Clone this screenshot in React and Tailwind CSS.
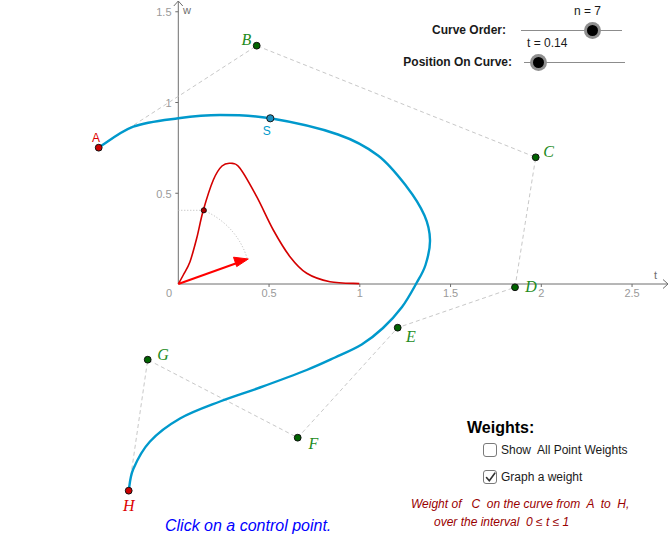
import React from "react";

const BLUE = [
  [98.7, 147.7], [133.3, 126.7], [178.3, 118.3], [220, 115], [270.3, 118.3],
  [338, 134.5], [378, 155.5], [406.7, 186.7], [424.5, 215.5], [430, 240],
  [425.5, 265], [416, 284], [402, 307], [383, 328], [361.7, 344.5],
  [335, 357.5], [306.7, 370], [260, 387.5], [220, 401.5],
  [180, 418.5], [150, 441.5], [133.3, 469], [128.7, 490.7],
];

const RED = [
  [178.3, 284], [183.3, 275], [190, 261.7], [196.7, 238.3], [203.3, 210.3],
  [213.3, 180], [222, 166], [231, 163.3], [240, 168.3], [256.7, 196.7],
  [273.3, 230], [290, 256.7], [306.7, 273.3], [330, 281.7], [359.3, 283.6],
];

function smooth(pts) {
  const n = pts.length;
  let d = `M${pts[0][0]},${pts[0][1]}`;
  for (let i = 0; i < n - 1; i++) {
    const p0 = pts[Math.max(i - 1, 0)];
    const p1 = pts[i];
    const p2 = pts[i + 1];
    const p3 = pts[Math.min(i + 2, n - 1)];
    const c1 = [p1[0] + (p2[0] - p0[0]) / 6, p1[1] + (p2[1] - p0[1]) / 6];
    const c2 = [p2[0] - (p3[0] - p1[0]) / 6, p2[1] - (p3[1] - p1[1]) / 6];
    d += ` C${c1[0].toFixed(2)},${c1[1].toFixed(2)} ${c2[0].toFixed(2)},${c2[1].toFixed(2)} ${p2[0]},${p2[1]}`;
  }
  return d;
}

const CTRL = {
  A: [98.7, 147.7],
  B: [256.7, 45.7],
  C: [535.7, 157.3],
  D: [515, 287.3],
  E: [397.7, 327.7],
  F: [297.7, 437.7],
  G: [147.7, 359.7],
  H: [128.7, 490.7],
};

const SANS = "'Liberation Sans', Arial, sans-serif";
const SERIF = "'Liberation Serif', 'Times New Roman', serif";

function Canvas() {
  const order = ["A", "B", "C", "D", "E", "F", "G", "H"];
  const poly = order.map((k) => CTRL[k].join(",")).join(" ");
  const ox = 178.3;
  const oy = 284;
  const u = 181.5;
  const xt = [0.5, 1, 1.5, 2, 2.5];
  const yt = [0.5, 1, 1.5];
  const green = ["B", "C", "D", "E", "F", "G"];
  const gLabels = {
    B: [246.5, 45],
    C: [548.5, 157],
    D: [531, 291.5],
    E: [411, 342],
    F: [313.5, 449],
    G: [163, 359.5],
  };
  return (
    <svg className="absolute inset-0" width="670" height="550" viewBox="0 0 670 550">
      <g stroke="#6e6e6e" strokeWidth="1" fill="none">
        <line x1={ox} y1={oy} x2={668} y2={oy} />
        <line x1={ox} y1={oy} x2={ox} y2={1} />
        <polyline points="663,279.5 668,284 663,288.5" />
        <polyline points="173.8,6 178.3,1 182.8,6" />
        {xt.map((t) => (
          <line key={t} x1={ox + t * u} y1={oy} x2={ox + t * u} y2={oy + 3} />
        ))}
        {yt.map((t) => (
          <line key={t} x1={ox - 3} y1={oy - t * u} x2={ox} y2={oy - t * u} />
        ))}
      </g>
      <g fill="#9a9a9a" fontFamily={SANS} fontSize="11">
        {xt.map((t) => (
          <text key={t} x={ox + t * u} y={297} textAnchor="middle">{t}</text>
        ))}
        <text x={172} y={297} textAnchor="end">0</text>
        {yt.map((t) => (
          <text key={t} x={171.5} y={oy - t * u + 4.5} textAnchor="end">{t}</text>
        ))}
      </g>
      <g fill="#6e6e6e" fontFamily={SANS} fontSize="11">
        <text x={183} y={14}>w</text>
        <text x={654} y={279}>t</text>
      </g>

      <polyline points={poly} fill="none" stroke="#c8c8c8" strokeWidth="1" strokeDasharray="4 3" />

      <line x1={ox} y1={210.3} x2={203.3} y2={210.3} stroke="#b5b5b5" strokeWidth="1" strokeDasharray="1 2" />
      <path d="M203.3,210.3 A76,76 0 0 1 247.5,259.5" fill="none" stroke="#b5b5b5" strokeWidth="1" strokeDasharray="1 2" />
      <path d={smooth(RED)} fill="none" stroke="#d40000" strokeWidth="1.6" />
      <line x1={ox} y1={oy} x2={237} y2={263} stroke="#ff0000" strokeWidth="2" />
      <polygon points="248.3,259 233.5,257.2 236.7,266.6" fill="#ff0000" stroke="#ff0000" strokeWidth="1" strokeLinejoin="round" />
      <circle cx={203.8} cy={210.3} r={2.6} fill="#a80000" stroke="#000" strokeWidth="0.8" />

      <path d={smooth(BLUE)} fill="none" stroke="#0099cc" strokeWidth="2.4" strokeLinecap="round" />

      {green.map((k) => (
        <circle key={k} cx={CTRL[k][0]} cy={CTRL[k][1]} r={3.4} fill="#006400" stroke="#111" strokeWidth="1" />
      ))}
      <circle cx={CTRL.A[0]} cy={CTRL.A[1]} r={3.4} fill="#cc0000" stroke="#111" strokeWidth="1" />
      <circle cx={CTRL.H[0]} cy={CTRL.H[1]} r={3.4} fill="#cc0000" stroke="#111" strokeWidth="1" />
      <circle cx={270.3} cy={118.3} r={3.6} fill="#1c8fc0" stroke="#1a1a1a" strokeWidth="1" />

      <g fontFamily={SERIF} fontStyle="italic" fontSize="16" fill="#228b22" textAnchor="middle">
        {green.map((k) => (
          <text key={k} x={gLabels[k][0]} y={gLabels[k][1]}>{k}</text>
        ))}
        <text x={128.7} y={511} fill="#dd0000">H</text>
      </g>
      <text x={96} y={141.5} fontFamily={SANS} fontSize="12" fill="#dd0000" textAnchor="middle">A</text>
      <text x={266.7} y={135} fontFamily={SANS} fontSize="12" fill="#0099cc" textAnchor="middle">S</text>
    </svg>
  );
}

function Slider({ knob, value, valueLeft, gap }) {
  return (
    <div className={`relative h-[1px] w-[101px] bg-[#8c8c8c] ${gap}`}>
      <span className="absolute top-[-27px] text-[12px] leading-[16px] whitespace-nowrap" style={{ left: valueLeft }}>
        {value}
      </span>
      <div
        className="absolute top-[-8px] w-[17px] h-[17px] rounded-full bg-[#8f8f8f] flex items-center justify-center"
        style={{ left: knob - 8.5 }}
      >
        <div className="w-[11px] h-[11px] rounded-full bg-black" />
      </div>
    </div>
  );
}

function Check({ checked }) {
  return (
    <div className="w-[14px] h-[14px] rounded-[3px] border-[1.5px] border-[#7a7a7a] bg-white flex items-center justify-center">
      {checked && (
        <svg width="11" height="11" viewBox="0 0 11 11">
          <path d="M1.5 5.5 L4.3 8.8 L9.8 1.2" fill="none" stroke="#333" strokeWidth="1.6" strokeLinejoin="round" strokeLinecap="round" />
        </svg>
      )}
    </div>
  );
}

export default function App() {
  return (
    <div className="relative w-[670px] h-[550px] bg-white overflow-hidden font-['Liberation_Sans',Arial,sans-serif] text-[#1a1a1a]">
      <Canvas />

      {/* slider panel */}
      <div className="absolute left-[380px] top-[22px] flex flex-col gap-[16px] text-[12px] leading-[16px]">
        <div className="flex items-center h-[16px]">
          <span className="w-[126px] text-right font-bold">Curve Order:</span>
          <Slider gap="ml-[15px]" knob={71.3} value="n = 7" valueLeft={53} />
        </div>
        <div className="flex items-center h-[16px]">
          <span className="w-[132px] text-right font-bold">Position On Curve:</span>
          <Slider gap="ml-[12px]" knob={14.3} value="t = 0.14" valueLeft={3} />
        </div>
      </div>

      {/* weights panel */}
      <div className="absolute left-[411px] top-[418px] flex flex-col text-[12px]">
        <div className="ml-[56px] text-[16px] font-bold leading-[19px] text-black">Weights:</div>
        <div className="mt-[6px] ml-[72px] flex items-center gap-[4px] leading-[14px] whitespace-pre">
          <Check />
          <span>Show  All Point Weights</span>
        </div>
        <div className="mt-[13px] ml-[72px] flex items-center gap-[4px] leading-[14px]">
          <Check checked />
          <span>Graph a weight</span>
        </div>
        <div className="mt-[11px] italic leading-[18px] text-[#990000] whitespace-pre">
          <div>Weight of   C  on the curve from  A  to  H,</div>
          <div className="pl-[23px]">over the interval  0 ≤ t ≤ 1</div>
        </div>
      </div>

      <div className="absolute left-[165px] top-[516px] text-[16px] italic leading-[19px] text-[#0000ff]">
        Click on a control point.
      </div>
    </div>
  );
}
